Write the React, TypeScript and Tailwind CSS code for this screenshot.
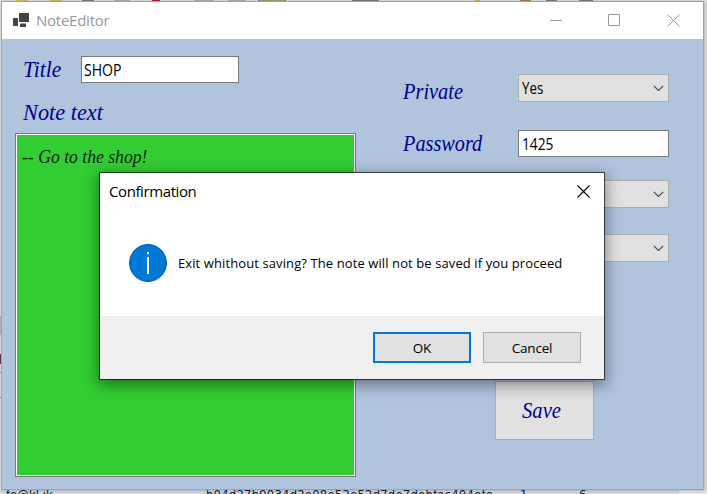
import type { ReactNode } from "react";

const script = "font-['Gabriola','Liberation_Serif',serif] italic whitespace-nowrap inline-block origin-left";

function Chevron() {
  return (
    <svg width="11" height="7" viewBox="0 0 11 7" fill="none" stroke="#444" strokeWidth="1.1">
      <path d="M0.8 0.8 5.5 5.5 10.2 0.8" />
    </svg>
  );
}

function Combo({ value, className }: { value?: string; className: string }) {
  return (
    <div className={`flex h-7 w-[151px] items-center justify-between border border-[#adadad] bg-[#e1e1e1] pl-[3px] pr-1 text-[16px] text-black ${className}`}>
      <span className="origin-left scale-x-[0.83]">{value}</span>
      <Chevron />
    </div>
  );
}

function Field({ label, children }: { label: ReactNode; children: ReactNode }) {
  return (
    <div className="flex items-start">
      <div className="h-7 w-[115px] shrink-0 text-[24px] leading-7 text-[#00008b]">{label}</div>
      {children}
    </div>
  );
}

function Backdrop() {
  return (
    <div className="absolute inset-0 overflow-hidden bg-[#dedede]">
      <div className="flex h-[2px] items-start bg-[#dcdcdc]">
        <i className="ml-4 h-px w-3 bg-[#c9b766]" />
        <i className="ml-[22px] h-px w-3 bg-[#c9b766]" />
        <i className="ml-[20px] h-px w-3 bg-[#777]" />
        <i className="ml-[20px] h-px w-4 bg-[#aaa]" />
        <i className="ml-[22px] h-[2px] w-[8px] bg-[#b51f2d]" />
        <i className="ml-[34px] h-[2px] w-[20px] bg-[#aaa]" />
        <i className="ml-[14px] h-[2px] w-[18px] bg-[#aaa]" />
        <i className="ml-[12px] h-[2px] w-[28px] border-x border-[#2b7fc0] bg-[#9a9a70]" />
        <i className="ml-[66px] h-px w-[27px] bg-[#777]" />
        <i className="ml-[96px] h-[2px] w-[5px] bg-[#d6ab3c]" />
        <i className="ml-[40px] h-[2px] w-[11px] bg-[#a57b42]" />
        <i className="ml-[15px] h-[2px] w-[11px] bg-[#777]" />
        <i className="ml-[22px] h-[2px] w-[14px] bg-[#777]" />
      </div>
      <div className="mt-[314px] h-[19px] w-[3px] bg-[#b4b4b4]" />
      <div className="mt-[19px] h-[10px] w-[2px] bg-[#5a3a40]" />
      <div className="mt-[8px] h-px w-[2px] bg-[#888]" />
      <div className="mt-[24px] h-px w-[2px] bg-[#888]" />
      <div className="absolute bottom-0 left-0 flex h-[4px] w-full overflow-hidden bg-[#d3d8e2] pl-[6px] font-['DejaVu_Sans_Condensed','DejaVu_Sans',sans-serif] text-[13px] leading-[10px] text-[#222]">
        <span className="w-[200px] shrink-0">fe@kl.ik</span>
        <span className="w-[314px] shrink-0 tracking-[0.17px]">b04d27b9034d2e08e52e52d7de7debfac404efe</span>
        <span className="w-[59px] shrink-0">1</span>
        <span className="w-[100px] shrink-0">6</span>
        <span className="h-full flex-1 bg-[#e6e6e6]" />
      </div>
    </div>
  );
}

function Dialog() {
  return (
    <div className="absolute left-[99px] top-[172px] flex h-[208px] w-[506px] flex-col border border-[#000000a0] bg-white bg-clip-padding shadow-[0_4px_14px_1px_rgba(0,0,0,0.42)]">
      <div className="flex h-[37px] items-center justify-between pl-[9px] pr-[14px]">
        <span className="text-[15px] tracking-[-0.4px] text-black">Confirmation</span>
        <svg width="13" height="13" viewBox="0 0 13 13" stroke="#000" strokeWidth="1.1">
          <path d="M.5 .5 12.5 12.5M12.5 .5 .5 12.5" />
        </svg>
      </div>
      <div className="flex flex-1 items-start pl-[29px] pt-[34px]">
        <svg width="38" height="38" viewBox="0 0 38 38">
          <circle cx="19" cy="19" r="18.5" fill="#0078d7" stroke="#075a9d" />
          <path d="M18 8h2v2.2h-2zM18 13h2v17h-2z" fill="#fff" />
        </svg>
        <span className="ml-[11px] mt-[9px] whitespace-nowrap text-[13px] leading-5 tracking-[0.1px] text-black">
          Exit whithout saving? The note will not be saved if you proceed
        </span>
      </div>
      <div className="flex h-[63px] items-start justify-end gap-3 bg-[#f0f0f0] pr-[23px] pt-4 text-[13.5px] tracking-[-0.2px] text-black">
        <button className="h-[31px] w-[98px] border-2 border-[#0078d7] bg-[#e1e1e1] pt-px">OK</button>
        <button className="h-[31px] w-[98px] border border-[#adadad] bg-[#e1e1e1] pt-px">Cancel</button>
      </div>
    </div>
  );
}

export default function App() {
  return (
    <div className="relative h-[494px] w-[707px] overflow-hidden font-['Segoe_UI','Open_Sans',sans-serif]">
      <Backdrop />
      <div className="relative ml-px flex h-[490px] w-[703px] flex-col pt-px">
        <div className="flex h-full flex-col border border-[#a0a3a8] bg-[#b0c4de] shadow-[1px_1px_3px_rgba(0,0,0,0.2)]">
          <div className="flex h-[37px] shrink-0 items-center bg-white pl-[11px] pr-[23px]">
            <svg width="17" height="15" viewBox="0 0 17 15" fill="#444">
              <path d="M6 0h10v9H6zM0 5h5v8H0zM7 10.5h6V14H7z" />
            </svg>
            <span className="ml-[6px] flex-1 text-[15px] tracking-[-0.25px] text-[#999]">NoteEditor</span>
            <svg width="130" height="13" viewBox="0 0 130 13" fill="none" stroke="#999">
              <path d="M0 6.5h12M58.5 .5h11v11h-11zM117.5 .5l12 12M129.5 .5l-12 12" />
            </svg>
          </div>
          <div className="flex flex-1">
            <div className="w-[388px] pl-[13px] pt-[17px]">
              <div className="flex h-[27px] pl-[8px]">
                <div className="w-[58px] text-[24px] leading-[24px] text-[#00008b]">
                  <span className={`${script} scale-x-[0.9]`}>Title</span>
                </div>
                <div className="flex h-[27px] w-[158px] items-center border border-[#7a7a7a] bg-white pl-[2px] text-[16px] text-black">
                  <span className="origin-left scale-x-[0.88]">SHOP</span>
                </div>
              </div>
              <div className="mt-4 h-[34px] pl-[8px] text-[24px] leading-[24px] text-[#00008b]">
                <span className={`${script} scale-x-[0.93]`}>Note text</span>
              </div>
              <div className="h-[344px] w-[341px] border border-[#7a7a7a] bg-white p-px">
                <div className="h-full bg-[#32cd32] pl-[5px] pt-[9px] text-[18px] leading-6 text-[#0b250b]">
                  <span className={`${script} scale-x-[0.98]`}>-- Go to the shop!</span>
                </div>
              </div>
            </div>
            <div className="flex flex-col pl-[13px] pt-[35px]">
              <Field label={<span className={`${script} translate-y-[2px] scale-x-[0.85]`}>Private</span>}>
                <Combo value="Yes" className="mb-7" />
              </Field>
              <Field label={<span className={`${script} -translate-y-[2px] scale-x-[0.845]`}>Password</span>}>
                <div className="flex h-[27px] w-[151px] items-center border border-[#7a7a7a] bg-white pl-[3px] text-[16px] text-black">
                  <span className="origin-left scale-x-[0.86]">1425</span>
                </div>
              </Field>
              <Combo className="ml-[115px] mt-[22px]" />
              <Combo className="ml-[115px] mt-[26px]" />
              <button className="ml-[92px] mt-[119px] h-[59px] w-[99px] border border-[#adadad] bg-[#e1e1e1] text-[24px] text-[#00008b]">
                <span className={`${script} -translate-y-px origin-center scale-x-[0.86]`}>Save</span>
              </button>
            </div>
          </div>
        </div>
      </div>
      <Dialog />
    </div>
  );
}
